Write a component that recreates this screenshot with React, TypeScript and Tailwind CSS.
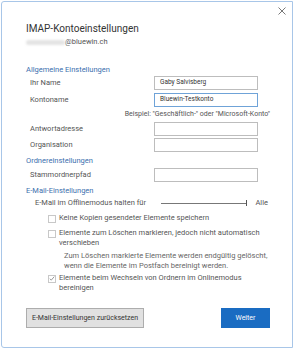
import React from 'react'

const font = { fontFamily: 'Roboto, "Noto Sans", sans-serif' }

function Field({ label, value, focused }: { label: string; value?: string; focused?: boolean }) {
  return (
    <div className="flex items-center h-[15px] pl-[4px]">
      <div className="w-[124px] text-[7.5px] text-[#555]">{label}</div>
      <div
        className={`w-[104px] h-[14px] bg-white border flex items-center pl-[5px] text-[6.5px] text-[#333] ${
          focused ? 'border-[#6fa3d8]' : 'border-[#bdbdbd]'
        }`}
      >
        {value}
      </div>
    </div>
  )
}

function Check({ checked, children }: { checked?: boolean; children: React.ReactNode }) {
  return (
    <div className="flex items-start pl-[22px] gap-[3px]">
      <div className="w-[8px] h-[8px] mt-[1.5px] border border-[#c8c8c8] bg-white flex items-center justify-center shrink-0">
        {checked && (
          <svg width="7" height="7" viewBox="0 0 8 8">
            <path d="M1 4.3 L3 6.2 L7 1.5" fill="none" stroke="#555" strokeWidth="0.8" />
          </svg>
        )}
      </div>
      <div className="text-[7.5px] leading-[10px] text-[#555] whitespace-nowrap">{children}</div>
    </div>
  )
}

export default function App() {
  return (
    <div className="w-[295px] h-[351px] bg-white p-[1px]" style={font}>
      <div className="w-[292px] h-[347px] border border-[#a8c6e8] rounded-tl-[3px] rounded-bl-[3px] relative flex flex-col pl-[24px] pr-[24px]">
        <svg className="absolute right-[6px] top-[5px]" width="8" height="8" viewBox="0 0 8 8">
          <path d="M0.5 0.5 L7.5 7.5 M7.5 0.5 L0.5 7.5" stroke="#555" strokeWidth="0.8" />
        </svg>

        <div className="mt-[20px] text-[10px] leading-[14px] text-[#333]">IMAP-Kontoeinstellungen</div>
        <div className="flex items-center text-[7.5px] text-[#555] leading-[12px]">
          <span className="inline-block w-[39px] h-[5px] rounded-full bg-[#e4e4e4] blur-[1px]"></span>
          @bluewin.ch
        </div>

        <div className="mt-[17px] text-[7.5px] leading-[10px] text-[#3b6fae]">Allgemeine Einstellungen</div>
        <div className="flex flex-col gap-[2px]">
          <Field label="Ihr Name" value="Gaby Salvisberg" />
          <Field label="Kontoname" value="Bluewin-Testkonto" focused />
        </div>
        <div className="h-[14px] flex items-center justify-end -mr-[2px] text-[7px] text-[#555]">
          Beispiel: "Geschäftlich-" oder "Microsoft-Konto"
        </div>
        <div className="flex flex-col gap-[1px]">
          <Field label="Antwortadresse" />
          <Field label="Organisation" />
        </div>

        <div className="mt-[4px] text-[7.5px] leading-[10px] text-[#3b6fae]">Ordnereinstellungen</div>
        <div className="mt-[1px]">
          <Field label="Stammordnerpfad" />
        </div>

        <div className="mt-[4px] text-[7.5px] leading-[10px] text-[#3b6fae]">E-Mail-Einstellungen</div>
        <div className="mt-[1px] flex items-center h-[12px] pl-[9px] text-[7.5px] text-[#555]">
          <div className="w-[129px]">E-Mail im Offlinemodus halten für</div>
          <div className="w-[88px] h-[1px] bg-[#777] relative">
            <div className="absolute right-0 top-[-2.5px] w-[1px] h-[6px] bg-[#555]"></div>
          </div>
          <div className="ml-[8px]">Alle</div>
        </div>

        <div className="mt-[4px] flex flex-col gap-[5px]">
          <Check>Keine Kopien gesendeter Elemente speichern</Check>
          <Check>
            Elemente zum Löschen markieren, jedoch nicht automatisch
            <br />
            verschieben
          </Check>
        </div>
        <div className="mt-[3px] pl-[38px] text-[7.5px] leading-[10px] text-[#666] whitespace-nowrap">
          Zum Löschen markierte Elemente werden endgültig gelöscht,
          <br />
          wenn die Elemente im Postfach bereinigt werden.
        </div>
        <div className="mt-[2px]">
          <Check checked>
            Elemente beim Wechseln von Ordnern im Onlinemodus
            <br />
            bereinigen
          </Check>
        </div>

        <div className="mt-[15px] -mr-[2px] flex items-center justify-between">
          <div className="w-[118px] h-[20px] bg-[#e1e1e1] border border-[#adadad] flex items-center justify-center text-[7px] text-[#333]">
            E-Mail-Einstellungen zurücksetzen
          </div>
          <div className="w-[49px] h-[20px] bg-[#1a6cc2] flex items-center justify-center text-[7px] text-white">
            Weiter
          </div>
        </div>
      </div>
    </div>
  )
}
